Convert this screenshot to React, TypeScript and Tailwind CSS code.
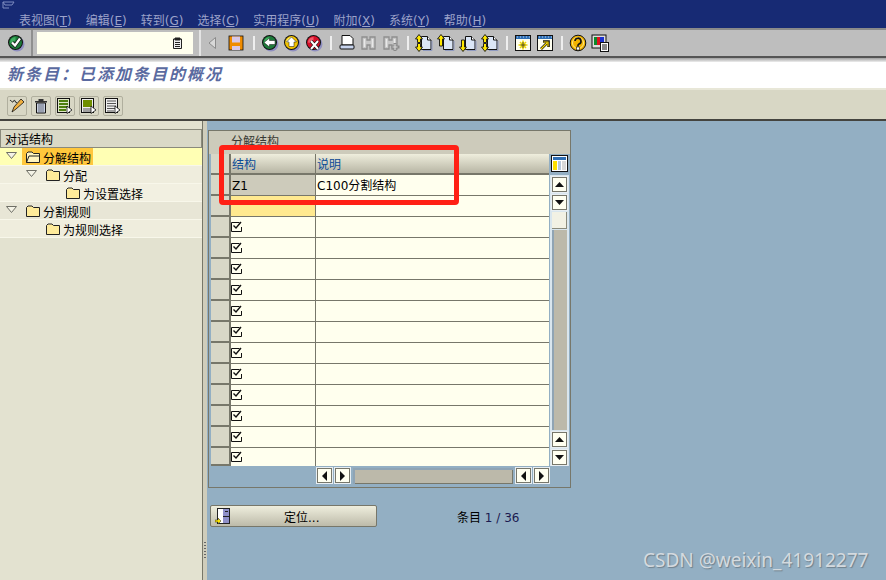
import type { ReactNode } from 'react';

const MENUS = [
  { label: '表视图', key: 'T' },
  { label: '编辑', key: 'E' },
  { label: '转到', key: 'G' },
  { label: '选择', key: 'C' },
  { label: '实用程序', key: 'U' },
  { label: '附加', key: 'X' },
  { label: '系统', key: 'Y' },
  { label: '帮助', key: 'H' },
];

const CHECK_ROWS = Array.from({ length: 12 }, (_, i) => i);

function Svg({ children, w = 18, h = 18 }: { children: ReactNode; w?: number; h?: number }) {
  return (
    <svg width={w} height={h} viewBox={`0 0 ${w} ${h}`} className="block shrink-0">
      {children}
    </svg>
  );
}

function RoundIcon({ fill, hi, children }: { fill: string; hi: string; children: ReactNode }) {
  return (
    <Svg>
      <circle cx="10" cy="10" r="7.5" fill="#8f8fc0" />
      <circle cx="8.5" cy="8.5" r="7.5" fill="#111" />
      <circle cx="8.5" cy="8.5" r="6.5" fill={fill} />
      <path d="M3 8.5a5.5 5.5 0 0 1 5.5-5.5v3l-3 3z" fill={hi} />
      {children}
    </Svg>
  );
}

const ARROW_UP_TALL = 'M4 .5 7.5 5h-2v7h-3V5h-2z';
const ARROW_DOWN_TALL = 'M4 17.5.5 13h2V6h3v7h2z';
const ARROW_UP_SHORT = 'M4 .5 7.5 5h-2v3.500h-3V5h-2z';
const ARROW_DOWN_SHORT = 'M4 17.5.5 13h2V9.500h3V13h2z';

function SheetArrow({ kind }: { kind: 'up' | 'down' | 'both' }) {
  return (
    <Svg>
      <path d="M6.500 2.500h6l3.500 3.500v9.500H6.500z" fill="#dbe6f7" stroke="#111" />
      <path d="M12.500 2.500V6H16" fill="#fff" stroke="#111" />
      <path d="M17 7v9.500H8" fill="none" stroke="#8f9ac0" />
      {kind === 'up' && <path d={ARROW_UP_TALL} fill="#ffe800" stroke="#111" strokeWidth=".9" />}
      {kind === 'down' && <path d={ARROW_DOWN_TALL} fill="#ffe800" stroke="#111" strokeWidth=".9" />}
      {kind === 'both' && <path d={ARROW_UP_SHORT} fill="#ffe800" stroke="#111" strokeWidth=".9" />}
      {kind === 'both' && <path d={ARROW_DOWN_SHORT} fill="#ffe800" stroke="#111" strokeWidth=".9" />}
    </Svg>
  );
}

function Binoculars({ plus = false }: { plus?: boolean }) {
  return (
    <Svg>
      <path d="M2 3h5v3h3V3h5v12h-5v-4H7v4H2z" fill="#c6c6c6" stroke="#8f8f8f" strokeWidth="1.3" />
      <path d="M4.500 5v8M12.500 5v8" stroke="#e8e8e8" strokeWidth="1.500" />
      {plus && <path d="M13 9v8M9.500 13h8" stroke="#8a8a8a" strokeWidth="3" />}
      {plus && <path d="M13 10v6M10.500 13h5" stroke="#d8d8d8" strokeWidth="1.200" />}
    </Svg>
  );
}

function WindowIcon({ children }: { children: ReactNode }) {
  return (
    <Svg w={17} h={17}>
      <rect x=".5" y=".5" width="15" height="15" fill="#fffff0" stroke="#111" />
      <rect x="1" y="1" width="14" height="3" fill="#2f6fb5" />
      <path d="M2 2h1M5 2h1M8 2h1M11 2h1M14 2h1" stroke="#bcd6f0" />
      {children}
    </Svg>
  );
}

function ToolSep() {
  return <div className="ml-[5px] mr-[4px] h-[14px] w-[2px] bg-[#eeeeee]" />;
}

function Slot({ children, w = 22 }: { children: ReactNode; w?: number }) {
  return (
    <div className="flex h-[20px] items-center justify-center" style={{ width: w }}>
      {children}
    </div>
  );
}

function AppButton({ children }: { children: ReactNode }) {
  return (
    <div className="flex h-[20px] w-[20px] items-center justify-center rounded-[2px] border border-[#b0af9e] bg-[#d8d7c5]">
      {children}
    </div>
  );
}

function ListIcon({ green, top }: { green?: boolean; top?: boolean }) {
  return (
    <Svg w={16} h={16}>
      <rect x=".5" y=".5" width="12" height="14" fill={green ? '#dfe6c8' : '#eeeeee'} stroke="#111" />
      {top ? (
        <rect x="2" y="2" width="9" height="7" fill="#6f8f00" />
      ) : (
        <path d={green ? 'M2 3h9M2 6h9M2 9h9M2 12h7' : 'M2 3h9M2 5.5h9M2 8h9M2 10.5h9M2 13h7'} stroke={green ? '#4f7f10' : '#555'} strokeWidth={green ? 2 : 1} />
      )}
      {top && <path d="M2 11h8M2 13h8" stroke="#555" />}
      <path d="M10 8l5 4-5 3.5z" fill="#fff" stroke="#111" strokeWidth=".8" />
    </Svg>
  );
}

function Folder({ open = false }: { open?: boolean }) {
  return (
    <svg width="14" height="12" viewBox="0 0 14 12" className="block shrink-0">
      <path d="M.5 2.5 2 1h4l1.5 1.5h6v9H.5z" fill={open ? '#fff4c0' : '#ffeb9a'} stroke="#222" />
      {open && <path d="M.5 11.5 3 5h10.5" fill="none" stroke="#222" />}
    </svg>
  );
}

function Tri() {
  return (
    <svg width="11" height="7" viewBox="0 0 11 7" className="block shrink-0">
      <path d="M.5.5h10L5.5 6.5z" fill="#f4f3e6" stroke="#6f6f66" />
    </svg>
  );
}

function TreeRow({ children, indent, bg, tri }: { children: ReactNode; indent: number; bg: string; tri?: number }) {
  return (
    <div className={`relative flex h-[18px] items-center border-b border-[#f8f7ea] ${bg}`} style={{ paddingLeft: indent }}>
      {tri !== undefined && (
        <span className="absolute top-[4px]" style={{ left: tri }}>
          <Tri />
        </span>
      )}
      {children}
    </div>
  );
}

function ScrollBtn({ dir }: { dir: 'up' | 'down' | 'left' | 'right' }) {
  const d = { up: 'M1 6 5.5 1 10 6z', down: 'M1 1h9L5.5 6z', left: 'M6 0v10L1 5z', right: 'M1 0v10l5-5z' }[dir];
  const vertical = dir === 'up' || dir === 'down';
  return (
    <div className="flex h-[17px] w-[17px] items-center justify-center border border-[#e8eef2] bg-[#fffff0] shadow-[inset_-1px_-1px_0_#77776a,inset_1px_1px_0_#77776a]">
      <svg width={vertical ? 11 : 7} height={vertical ? 7 : 10} viewBox={vertical ? '0 0 11 7' : '0 0 7 10'} className="block">
        <path d={d} fill="#111" />
      </svg>
    </div>
  );
}

function RowHead() {
  return <div className="h-full w-[20px] shrink-0 border-r-2 border-b-2 border-[#77776a] bg-[#d8d7c7]" />;
}

function CheckMark() {
  return (
    <svg width="12" height="12" viewBox="0 0 12 12" className="block">
      <path d="M10.5 6v4.5h-10v-9h8" fill="none" stroke="#111" />
      <path d="M2.5 4.5 5 7l5-6" fill="none" stroke="#111" strokeWidth="1.4" />
    </svg>
  );
}

export default function App() {
  return (
    <div className="relative flex h-[580px] w-[886px] flex-col overflow-hidden bg-[#93afc3] font-['DejaVu_Sans','Noto_Sans_CJK_SC',sans-serif] text-[12px] leading-none text-black">
      {/* menu */}
      <div className="relative h-[28px] shrink-0 bg-[#172a74]">
        <svg width="15" height="9" viewBox="0 0 15 9" className="absolute left-0 top-[1px]">
          <path d="M3 1h11l-2 3H5zM3 1v6h6" fill="none" stroke="#7f8cc0" />
        </svg>
        <div className="flex gap-[14px] pl-[19px] pt-[15px] text-[#9da3ca]">
          {MENUS.map(m => (
            <span key={m.key} className="whitespace-nowrap">
              {m.label}(<span className="underline">{m.key}</span>)
            </span>
          ))}
        </div>
      </div>

      {/* system toolbar */}
      <div className="flex h-[30px] shrink-0 items-center border-t-2 border-b-2 border-t-[#8a8a8a] border-b-[#555555] bg-[#bebebe]">
        <div className="flex h-full w-[33px] items-center justify-center border-r-2 border-[#8f8f8f]">
          <RoundIcon fill="#1d7a3a" hi="#3fae5f">
            <path d="M5 8.500 8 11.500 13 4.500" fill="none" stroke="#111" strokeWidth="3.600" />
            <path d="M5 8.500 8 11.500 13 4.500" fill="none" stroke="#fff" strokeWidth="2.200" />
          </RoundIcon>
        </div>
        <div className="ml-[4px] flex h-[22px] w-[156px] items-center justify-end bg-[#ffffee] pr-[11px]">
          <svg width="9" height="12" viewBox="0 0 9 12" className="block">
            <path d="M.5 2h8v9.5h-8z" fill="#eee" stroke="#222" />
            <path d="M2 1h5v2H2zM2 5.5h5M2 7.5h5M2 9.5h5" fill="#222" stroke="#222" />
          </svg>
        </div>
        <div className="ml-[6px] h-full w-[2px] bg-[#e4e4e4]" />
        <div className="flex items-center">
          <Slot w={22}>
            <svg width="9" height="12" viewBox="0 0 9 12" className="block">
              <path d="M7.5.5v11L1 6z" fill="#d8d8d8" stroke="#8a8a8a" />
            </svg>
          </Slot>
          <Slot w={25}>
            <Svg w={16} h={16}>
              <rect x="1" y="1" width="14" height="14" fill="#f08c00" stroke="#111" strokeWidth=".8" />
              <rect x="4" y="1.5" width="8" height="6" fill="#d8c8e8" />
              <rect x="4" y="11" width="8" height="4" fill="#d8c8e8" />
            </Svg>
          </Slot>
          <ToolSep />
          <Slot>
            <RoundIcon fill="#1d7a3a" hi="#3fae5f">
              <path d="M3 8.5 8.5 4v2.5H14v4H8.5V13z" fill="#fff" stroke="#111" strokeWidth=".5" />
            </RoundIcon>
          </Slot>
          <Slot>
            <RoundIcon fill="#f2c200" hi="#fff06a">
              <path d="M8.5 3 13.5 8H11v4.5H6V8H3.5z" fill="#fff" stroke="#111" strokeWidth=".5" />
            </RoundIcon>
          </Slot>
          <Slot>
            <RoundIcon fill="#d9102a" hi="#f05a6a">
              <path d="M6 7l7 8M13 7l-7 8" stroke="#111" strokeWidth="3.400" />
              <path d="M6 7l7 8M13 7l-7 8" stroke="#fff" strokeWidth="2" />
            </RoundIcon>
          </Slot>
          <ToolSep />
          <Slot>
            <Svg>
              <path d="M4 1.5h8l3 3V11H4z" fill="#fff" stroke="#111" />
              <rect x="2" y="11" width="14" height="4" rx="1" fill="#c8d4ee" stroke="#111" />
            </Svg>
          </Slot>
          <Slot>
            <Binoculars />
          </Slot>
          <Slot>
            <Binoculars plus />
          </Slot>
          <ToolSep />
          <Slot>
            <SheetArrow kind="both" />
          </Slot>
          <Slot>
            <SheetArrow kind="up" />
          </Slot>
          <Slot>
            <SheetArrow kind="down" />
          </Slot>
          <Slot>
            <SheetArrow kind="both" />
          </Slot>
          <ToolSep />
          <Slot>
            <WindowIcon>
              <path d="M8 5.500v9M3.500 10h9M5 7l6 6M11 7l-6 6" stroke="#f0d800" strokeWidth="1.600" />
              <path d="M8 7v6M5.500 10h5" stroke="#333" strokeWidth=".8" />
            </WindowIcon>
          </Slot>
          <Slot>
            <WindowIcon>
              <path d="M4 14l6-6M6 6.5h5.5V12" fill="none" stroke="#111" strokeWidth="2.600" />
              <path d="M4 14l6-6M6.5 7h4.500V11.500" fill="none" stroke="#ffdf00" strokeWidth="1.200" />
            </WindowIcon>
          </Slot>
          <ToolSep />
          <Slot>
            <Svg>
              <circle cx="9" cy="9" r="7.800" fill="#f2b400" stroke="#111" />
              <circle cx="9" cy="9" r="5.500" fill="none" stroke="#ffe88a" />
              <path d="M6 7a3 3 0 1 1 4 3l-1 1v1.500" fill="none" stroke="#111" strokeWidth="1.600" />
              <rect x="7.500" y="13" width="3" height="3" fill="#fff" stroke="#111" strokeWidth=".6" />
            </Svg>
          </Slot>
          <Slot>
            <Svg>
              <rect x="1" y="1" width="14" height="13" fill="#ddd" stroke="#111" />
              <rect x="3" y="3" width="3" height="8" fill="#0a8a2a" />
              <rect x="6" y="3" width="3" height="8" fill="#e01020" />
              <rect x="9" y="3" width="4" height="8" fill="#1830d0" />
              <rect x="9.500" y="8.500" width="8" height="9" fill="#fff" stroke="#111" />
              <path d="M11 11h5M11 13h5M11 15h5" stroke="#111" />
            </Svg>
          </Slot>
        </div>
      </div>

      {/* title */}
      <div className="h-[4px] shrink-0 bg-gradient-to-b from-[#a0a0a0] to-[#eeeeee]" />
      <div className="flex h-[28px] shrink-0 items-center border-b-2 border-[#e8e7d8] bg-white pl-[7px] text-[16px] font-bold italic tracking-[2px] text-[#5a6aa0]">
        新条目：已添加条目的概况
      </div>

      {/* application toolbar */}
      <div className="flex h-[31px] shrink-0 items-center gap-[4px] border-b-2 border-[#44443f] bg-[#d8d7c5] pl-[7px] pt-[2px]">
        <AppButton>
          <Svg w={17} h={17}>
            <path d="M1 4c1-2 2 2 3 1s1-3 2-1 1 2 2 1" fill="none" stroke="#111" />
            <path d="M3 15l2-5 7-8 3 3-8 7z" fill="#f0b040" stroke="#111" strokeWidth=".8" />
          </Svg>
        </AppButton>
        <AppButton>
          <Svg w={14} h={16}>
            <path d="M4.500 1h5v2h-5zM1 3h12v1.500H1z" fill="#333" />
            <path d="M2.500 5h9v10h-9z" fill="#c8d0e0" stroke="#111" />
            <path d="M5 6v8M7 6v8M9 6v8" stroke="#6a7080" />
          </Svg>
        </AppButton>
        <AppButton>
          <ListIcon green />
        </AppButton>
        <AppButton>
          <ListIcon top />
        </AppButton>
        <AppButton>
          <ListIcon />
        </AppButton>
      </div>

      <div className="flex min-h-0 flex-1">
        {/* tree */}
        <div className="flex w-[203px] shrink-0 flex-col border-r border-[#777768] bg-[#e3e2d0] pt-[8px]">
          <div className="flex h-[19px] items-center border border-[#8a8a7c] bg-[#dad9c7] pl-[4px] pt-[2px]">对话结构</div>
          <TreeRow indent={22} tri={6} bg="bg-[#ffffb4]">
            <div className="flex h-full items-center gap-[3px] bg-[#ffc73c] pl-[4px] pr-[2px]">
              <Folder open />
              <span className="pt-[4px]">分解结构</span>
            </div>
          </TreeRow>
          <TreeRow indent={46} tri={26} bg="bg-[#efeddd]">
            <Folder />
            <span className="ml-[3px] pt-[4px]">分配</span>
          </TreeRow>
          <TreeRow indent={66} bg="bg-[#f2f0e1]">
            <Folder />
            <span className="ml-[3px] pt-[4px]">为设置选择</span>
          </TreeRow>
          <TreeRow indent={26} tri={6} bg="bg-[#e8e6d6]">
            <Folder />
            <span className="ml-[3px] pt-[4px]">分割规则</span>
          </TreeRow>
          <TreeRow indent={46} bg="bg-[#efeddd]">
            <Folder />
            <span className="ml-[3px] pt-[4px]">为规则选择</span>
          </TreeRow>
        </div>

        {/* sash */}
        <div className="flex w-[4px] shrink-0 flex-col items-center justify-end bg-[#cfcdbb] pb-[20px]">
          <div className="h-[18px] w-[2px] bg-[repeating-linear-gradient(to_bottom,#666_0,#666_1px,transparent_1px,transparent_3px)]" />
        </div>

        {/* table area */}
        <div className="min-w-0 flex-1 pl-[1px] pt-[9px]">
          <div className="h-[358px] w-[363px] border border-[#77776a] bg-[#93afc3]">
            <div className="h-[23px] bg-[#cdcbbb] pl-[22px] pt-[5px] text-[#3a3a34]">分解结构</div>
            <div className="flex pl-[2px]">
              <div className="w-[338px] shrink-0">
                <div className="flex h-[21px]">
                  <RowHead />
                  <div className="flex w-[85px] items-center border-r border-b-2 border-[#77776a] bg-gradient-to-b from-[#efeedd] to-[#b8b6a5] pl-[1px] pt-[2px] text-[#0a4a96]">结构</div>
                  <div className="flex flex-1 items-center border-b-2 border-[#77776a] bg-gradient-to-b from-[#efeedd] to-[#b8b6a5] pl-[1px] pt-[2px] text-[#0a4a96]">说明</div>
                </div>
                <div className="flex h-[21px]">
                  <RowHead />
                  <div className="flex w-[85px] items-center border-r border-b border-[#77776a] bg-[#cdcbbb] pl-[1px] pt-[2px]">Z1</div>
                  <div className="flex flex-1 items-center border-b border-[#77776a] bg-[#ffffee] pl-[1px] pt-[2px]">C100分割结构</div>
                </div>
                <div className="flex h-[21px]">
                  <RowHead />
                  <div className="w-[85px] border-r border-b border-[#77776a] bg-[#ffe98f]" />
                  <div className="flex-1 border-b border-[#77776a] bg-[#ffffee]" />
                </div>
                {CHECK_ROWS.map(r => (
                  <div key={r} className={r === 11 ? 'flex h-[18px]' : 'flex h-[21px]'}>
                    <RowHead />
                    <div className={`flex w-[85px] items-center border-r border-[#77776a] bg-[#ffffee] ${r === 11 ? '' : 'border-b'}`}>
                      <CheckMark />
                    </div>
                    <div className={`flex-1 bg-[#ffffee] ${r === 11 ? '' : 'border-b border-[#77776a]'}`} />
                  </div>
                ))}
              </div>
              <div className="ml-[1px] flex w-[19px] flex-col items-center">
                <div className="flex h-[21px] items-start pt-[1px]">
                  <Svg w={17} h={17}>
                    <rect x=".5" y=".5" width="16" height="16" fill="#fff" stroke="#111" />
                    <rect x="2" y="2" width="13" height="3" fill="#2f6fb5" />
                    <rect x="2" y="6" width="4" height="9" fill="#ffe000" />
                    <rect x="7" y="6" width="3" height="9" fill="#b8c8dc" />
                    <rect x="11" y="6" width="4" height="9" fill="#d8d8d8" />
                  </Svg>
                </div>
                <div className="flex w-full flex-col items-center gap-[1px] bg-[#d9e6ee] pt-[1px]">
                  <ScrollBtn dir="up" />
                  <ScrollBtn dir="down" />
                  <div className="h-[17px] w-[15px] border-r border-b border-[#8a8a7c] bg-[#f2f1e4]" />
                  <div className="h-[200px] w-[15px] border-l-2 border-[#8fa4b4] bg-[#bcb9aa]" />
                  <ScrollBtn dir="up" />
                  <ScrollBtn dir="down" />
                </div>
              </div>
            </div>
            <div className="ml-[107px] mt-[1px] flex items-center gap-[1px]">
              <ScrollBtn dir="left" />
              <ScrollBtn dir="right" />
              <div className="mx-[1px] h-[16px] w-[160px] border-t-2 border-l-2 border-[#8fa4b4] bg-[#bcb9aa] shadow-[inset_-1px_-1px_0_#77776a]" />
              <ScrollBtn dir="left" />
              <ScrollBtn dir="right" />
            </div>
          </div>

          <div className="ml-[2px] mt-[17px] flex items-center">
            <div className="flex h-[22px] w-[167px] items-center rounded-[2px] border border-[#77776a] bg-gradient-to-b from-[#efeedd] to-[#bdbbaa] pl-[4px]">
              <Svg w={16} h={17}>
                <rect x="2.500" y=".5" width="12" height="15" fill="#8f90c8" stroke="#222" />
                <rect x="3" y="1" width="5" height="14" fill="#fff" />
                <path d="M8 8.500h6M10 3.500h3" stroke="#222" />
                <path d="M0 12h3v-2l3 3-3 3v-2H0z" fill="#ffe800" stroke="#222" strokeWidth=".5" />
              </Svg>
              <span className="ml-[53px] pt-[4px]">定位...</span>
            </div>
            <div className="ml-[80px] whitespace-nowrap pt-[4px]">
              条目 <span className="text-[#1a1a50]">1 / 36</span>
            </div>
          </div>
        </div>
      </div>

      {/* annotation drawn over the screenshot */}
      <div className="absolute left-[219px] top-[145px] h-[60px] w-[240px] rounded-[4px] border-[5px] border-[#ff2015]" />
      <div className="absolute left-[643px] top-[550px] whitespace-nowrap font-['Noto_Sans'] text-[19px] leading-[20px] text-[#d4dadf] [text-shadow:1px_1px_1px_#70808c]">
        CSDN @weixin_41912277
      </div>
    </div>
  );
}
